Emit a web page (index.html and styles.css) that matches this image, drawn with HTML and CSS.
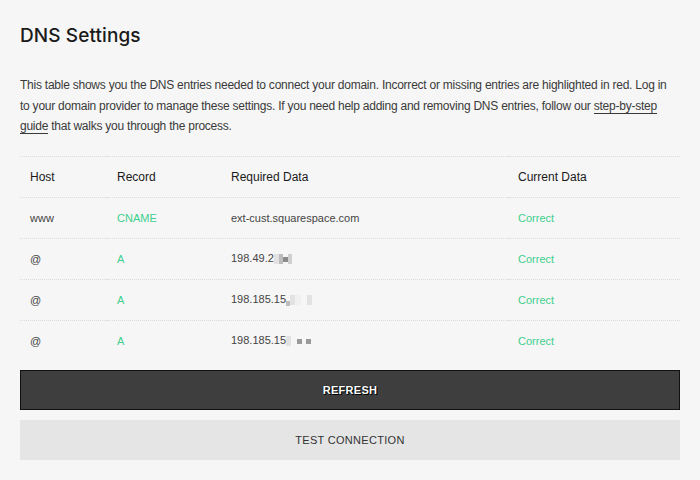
FILE: index.html
```html
<!DOCTYPE html>
<html lang="en">
<head>
  <meta charset="UTF-8">
  <title>DNS Settings</title>
  <link rel="stylesheet" href="styles.css">
</head>
<body>
  <div class="panel">
    <h1>DNS Settings</h1>
    <p class="intro">This table shows you the DNS entries needed to connect your domain. Incorrect or missing entries are highlighted in red. Log in to your domain provider to manage these settings. If you need help adding and removing DNS entries, follow our <a href="#">step-by-step guide</a> that walks you through the process.</p>

    <table class="dns">
      <thead>
        <tr>
          <th class="c-host">Host</th>
          <th class="c-rec">Record</th>
          <th class="c-data">Required Data</th>
          <th>Current Data</th>
        </tr>
      </thead>
      <tbody>
        <tr>
          <td>www</td>
          <td class="ok">CNAME</td>
          <td>ext-cust.squarespace.com</td>
          <td class="ok">Correct</td>
        </tr>
        <tr>
          <td>@</td>
          <td class="ok">A</td>
          <td>198.49.2<span class="blur"><i class="b1"></i><i class="b2"></i><i class="b3"></i><i class="b4"></i></span></td>
          <td class="ok">Correct</td>
        </tr>
        <tr>
          <td>@</td>
          <td class="ok">A</td>
          <td>198.185.15<span class="blur"><i class="b2 low"></i><i class="b1"></i><i class="b5"></i><i class="sp"></i><i class="b1"></i></span></td>
          <td class="ok">Correct</td>
        </tr>
        <tr>
          <td>@</td>
          <td class="ok">A</td>
          <td>198.185.15<span class="blur"><i class="b1"></i><i class="sp"></i><i class="b3 dot"></i><i class="sp2"></i><i class="b3 dot"></i></span></td>
          <td class="ok">Correct</td>
        </tr>
      </tbody>
    </table>

    <button class="btn refresh">REFRESH</button>
    <button class="btn test">TEST CONNECTION</button>
  </div>
</body>
</html>
```

FILE: styles.css
```css
* {
  margin: 0;
  padding: 0;
  box-sizing: border-box;
}
body {
  font-family: "Liberation Sans", Arial, sans-serif;
  background-color: #f6f6f6;
  color: #1a1a1a;
}
.panel {
  padding: 24px 20px 0 20px;
}
h1 {
  font-family: "Inter", "Liberation Sans", sans-serif;
  font-size: 19px;
  font-weight: 500;
  letter-spacing: 0.1px;
  line-height: 24px;
}
.intro {
  max-width: 654px;
  margin-top: 27px;
  font-size: 12px;
  letter-spacing: -0.24px;
  line-height: 20.5px;
  color: #3a3a3a;
}
.intro a {
  color: #3a3a3a;
  text-decoration: none;
  border-bottom: 1px solid #3a3a3a;
}
.dns {
  width: 100%;
  margin-top: 19px;
  border-collapse: collapse;
  font-size: 11px;
}
.dns th,
.dns td {
  text-align: left;
  height: 41px;
  padding: 0 0 0 10px;
  border-top: 1px dotted #dcdcdc;
  vertical-align: middle;
}
.dns th {
  font-weight: 400;
  font-size: 12px;
  color: #1a1a1a;
}
.dns td {
  color: #444;
}
.dns .c-host { width: 87px; }
.dns .c-rec { width: 114px; }
.dns .c-data { width: 287px; }
.dns td.ok {
  color: #3fcf8e;
}
.blur {
  display: inline-flex;
  align-items: center;
  vertical-align: middle;
  height: 12px;
}
.blur i {
  display: inline-block;
  height: 10px;
}
.blur .b1 { width: 5px; background: #e2e2e2; }
.blur .b2 { width: 4px; background: #bdbdbd; }
.blur .b3 { width: 5px; background: #8a8a8a; height: 5px; }
.blur .b4 { width: 4px; background: #d0d0d0; }
.blur .b5 { width: 6px; background: #f0f0f0; }
.blur .sp { width: 6px; }
.blur .sp2 { width: 4px; }
.blur .low { align-self: flex-end; height: 5px; }
.blur .dot { background: #9a9a9a; }
.btn {
  display: block;
  width: 100%;
  height: 40px;
  font-family: "Liberation Sans", sans-serif;
  font-size: 11px;
  letter-spacing: 0.3px;
  cursor: pointer;
}
.refresh {
  margin-top: 9px;
  background-color: #3e3e3e;
  border: 1px solid #111;
  color: #fff;
  font-weight: bold;
  text-shadow: 0 0 1px #000, 1px 1px 0 #000;
}
.test {
  margin-top: 10px;
  background-color: #e5e5e5;
  border: none;
  color: #333;
}
```
